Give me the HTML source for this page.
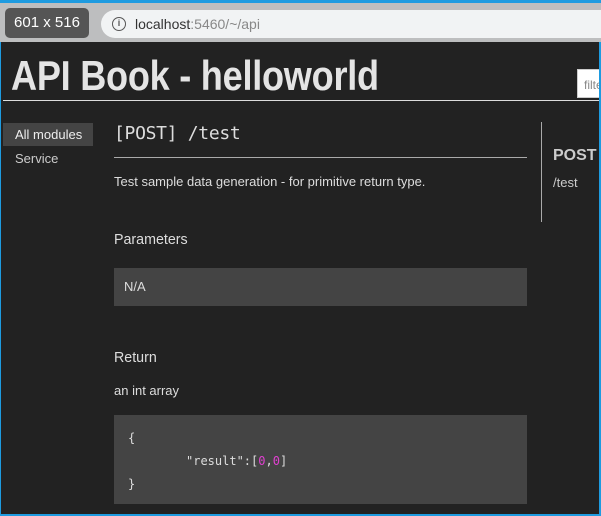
<!DOCTYPE html>
<html><head><style>
*{margin:0;padding:0;box-sizing:border-box}
body{width:601px;height:516px;overflow:hidden;background:#1e9be0;font-family:"Liberation Sans",sans-serif;position:relative}
.chrome{position:absolute;left:0;top:0;width:601px;height:42px;background:#bdbebf;border-top:3px solid #1e9be0}
.url{position:absolute;left:101px;top:7px;width:500px;height:28px;background:#f1f3f4;border-radius:14px 0 0 14px;font-size:14px;color:#333;line-height:28px;padding-left:34px}
.url span{color:#888}
.info{position:absolute;left:11px;top:7px;width:14px;height:14px;border:1.5px solid #555;border-radius:50%;font-size:9px;line-height:11px;text-align:center;font-weight:bold;color:#555}
.size{position:absolute;left:5px;top:5px;width:84px;height:30px;background:#555;border-radius:5px;color:#fff;font-size:15px;line-height:30px;text-align:center}
.page{position:absolute;left:1px;top:42px;width:598px;height:472px;background:#222;overflow:hidden}
h1{position:absolute;left:10px;top:10px;font-size:42px;font-weight:bold;color:#e4e4e4;transform:scaleX(.86);transform-origin:left;letter-spacing:-.3px;white-space:nowrap}
.hr{position:absolute;left:2px;top:58px;width:600px;height:1px;background:#ddd}
.filter{position:absolute;left:576px;top:27px;width:30px;height:29px;background:#fff;border:1px solid #ccc;font-size:12px;color:#888;padding:8px 0 0 6px}
.nav1{position:absolute;left:2px;top:81px;width:90px;height:23px;background:#444;color:#eee;font-size:13px;line-height:23px;padding-left:12px}
.nav2{position:absolute;left:14px;top:109px;color:#ccc;font-size:13px}
.main{position:absolute;left:113px;top:0;width:414px;color:#ddd}
.t{position:absolute;top:81px;font-family:"DejaVu Sans Mono",monospace;font-size:18px;color:#ddd;letter-spacing:-.3px}
.tl{position:absolute;top:115px;width:413px;height:1px;background:#aaa}
.d{position:absolute;top:132px;font-size:13px;color:#ddd}
.h{position:absolute;font-size:15px;color:#ddd;transform:scaleX(.95);transform-origin:left}
.box{position:absolute;left:0;width:413px;background:#444;font-size:13px;color:#ddd}
.code{font-family:"DejaVu Sans Mono",monospace;font-size:12px;line-height:23px;padding:12px 14px;color:#ddd}
.m{color:#e040d0}
.rv{position:absolute;left:540px;top:80px;width:1px;height:100px;background:#aaa}
.rp{position:absolute;left:552px;top:105px;font-weight:bold;font-size:16px;color:#ccc}
.rt{position:absolute;left:552px;top:133px;font-size:13px;color:#ccc}
</style></head><body>
<div class="chrome"><div class="size">601 x 516</div><div class="url"><div class="info">i</div>localhost<span>:5460/~/api</span></div></div>
<div class="page">
<h1>API Book - helloworld</h1>
<div class="hr"></div>
<div class="filter">filte</div>
<div class="nav1">All modules</div>
<div class="nav2">Service</div>
<div class="main">
<div class="t">[POST] /test</div>
<div class="tl"></div>
<div class="d">Test sample data generation - for primitive return type.</div>
<div class="h" style="top:189px">Parameters</div>
<div class="box" style="top:226px;height:38px;line-height:38px;padding-left:10px">N/A</div>
<div class="h" style="top:307px">Return</div>
<div class="d" style="top:341px">an int array</div>
<div class="box code" style="top:373px;height:89px">{<br><span style="padding-left:58px">"result":[<span class="m">0</span>,<span class="m">0</span>]</span><br>}</div>
</div>
<div class="rv"></div>
<div class="rp">POST</div>
<div class="rt">/test</div>
</div>
</body></html>
